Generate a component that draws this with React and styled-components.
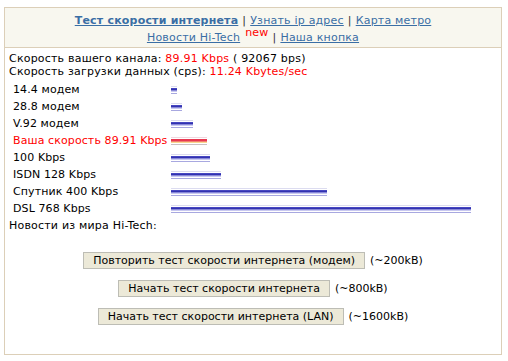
import React from 'react';
import styled, { createGlobalStyle } from 'styled-components';

const GlobalStyle = createGlobalStyle`
  html, body {
    margin: 0;
    padding: 0;
    background: #ffffff;
  }
  body {
    font-family: "DejaVu Sans", Verdana, sans-serif;
    font-size: 11px;
    color: #000000;
  }
`;

const Frame = styled.div`
  margin: 7px 4px 0 4px;
  width: 498px;
  height: 348px;
  border: 1px solid #dccfb8;
  box-sizing: border-box;
  background: #ffffff;
`;

const Header = styled.div`
  background: #f8f7ef;
  border-bottom: 1px solid #dccfb8;
  text-align: center;
  padding: 4px 0 1px 0;
  height: 40px;
  box-sizing: border-box;
  font-size: 11px;
  line-height: 17px;
  letter-spacing: 0.2px;
`;

const NavLine = styled.div`
  white-space: nowrap;
`;

const NavLink = styled.a`
  color: #3a6ea5;
  text-decoration: underline;
  font-weight: ${p => (p.$active ? 'bold' : 'normal')};
  cursor: pointer;
`;

const Sep = styled.span`
  color: #333333;
  margin: 0 4px;
`;

const NewMark = styled.span`
  position: relative;
  top: -5px;
  color: #ff0000;
  font-size: 11px;
  line-height: 11px;
  margin-left: 5px;
`;

const Body = styled.div`
  padding: 4px 4px 0 4px;
  letter-spacing: 0.2px;
`;

const InfoLine = styled.div`
  line-height: 13px;
  white-space: nowrap;
`;

const Red = styled.span`
  color: #ff0000;
`;

const SpeedTable = styled.div`
  display: grid;
  grid-template-columns: 158px 1fr;
  grid-auto-rows: 17px;
  margin-top: 3px;
  padding-left: 4px;
`;

const Label = styled.div`
  display: flex;
  align-items: center;
  white-space: nowrap;
  letter-spacing: 0.1px;
  color: ${p => (p.$mine ? '#ff0000' : '#000000')};
`;

const BarCell = styled.div`
  display: flex;
  align-items: center;
`;

const Bar = styled.div`
  height: 8px;
  background: ${p =>
    p.$mine
      ? 'linear-gradient(to bottom, #f0d8e0 0, #f0d8e0 1px, #ffffff 1px, #ffffff 2px, #e83850 2px, #e83850 4px, #f08070 4px, #f08070 5px, #f8d890 5px, #f8d890 6px, #ffffff 6px, #ffffff 7px, #c8c0c0 7px)'
      : 'linear-gradient(to bottom, #dcdcf0 0, #dcdcf0 1px, #ffffff 1px, #ffffff 2px, #5050c8 2px, #2828a8 4px, #8888d8 4px, #8888d8 5px, #c8c8f0 5px, #c8c8f0 6px, #ffffff 6px, #ffffff 7px, #a8a8e0 7px)'};
`;

const NewsTitle = styled.div`
  line-height: 13px;
  margin-top: 2px;
`;

const Actions = styled.div`
  display: flex;
  flex-direction: column;
  align-items: center;
  gap: 11px;
  margin-top: 20px;
  letter-spacing: 0;
`;

const ActionRow = styled.div`
  display: flex;
  align-items: center;
  gap: 5px;
  white-space: nowrap;
`;

const Button = styled.button`
  font-family: "DejaVu Sans", Verdana, sans-serif;
  font-size: 11px;
  color: #000000;
  background: #ece9d8;
  border: 1px solid #bdbdb5;
  padding: 0 9px;
  height: 17px;
  line-height: 15px;
  cursor: pointer;
`;

const rates = [
  { label: '14.4 модем', width: 6 },
  { label: '28.8 модем', width: 11 },
  { label: 'V.92 модем', width: 22 },
  { label: 'Ваша скорость 89.91 Kbps', width: 36, mine: true },
  { label: '100 Kbps', width: 39 },
  { label: 'ISDN 128 Kbps', width: 50 },
  { label: 'Спутник 400 Kbps', width: 156 },
  { label: 'DSL 768 Kbps', width: 300 },
];

const tests = [
  { title: 'Повторить тест скорости интернета (модем)', size: '(~200kB)' },
  { title: 'Начать тест скорости интернета', size: '(~800kB)' },
  { title: 'Начать тест скорости интернета (LAN)', size: '(~1600kB)' },
];

export default function App() {
  return (
    <>
      <GlobalStyle />
      <Frame>
        <Header>
          <NavLine>
            <NavLink $active>Тест скорости интернета</NavLink>
            <Sep>|</Sep>
            <NavLink>Узнать ip адрес</NavLink>
            <Sep>|</Sep>
            <NavLink>Карта метро</NavLink>
          </NavLine>
          <NavLine>
            <NavLink>Новости Hi-Tech</NavLink>
            <NewMark>new</NewMark>
            <Sep>|</Sep>
            <NavLink>Наша кнопка</NavLink>
          </NavLine>
        </Header>
        <Body>
          <InfoLine>
            Скорость вашего канала: <Red>89.91 Kbps</Red> ( 92067 bps)
          </InfoLine>
          <InfoLine>
            Скорость загрузки данных (cps): <Red>11.24 Kbytes/sec</Red>
          </InfoLine>
          <SpeedTable>
            {rates.map(r => (
              <React.Fragment key={r.label}>
                <Label $mine={r.mine}>{r.label}</Label>
                <BarCell>
                  <Bar $mine={r.mine} style={{ width: r.width }} />
                </BarCell>
              </React.Fragment>
            ))}
          </SpeedTable>
          <NewsTitle>Новости из мира Hi-Tech:</NewsTitle>
          <Actions>
            {tests.map(t => (
              <ActionRow key={t.size}>
                <Button>{t.title}</Button>
                <span>{t.size}</span>
              </ActionRow>
            ))}
          </Actions>
        </Body>
      </Frame>
    </>
  );
}
